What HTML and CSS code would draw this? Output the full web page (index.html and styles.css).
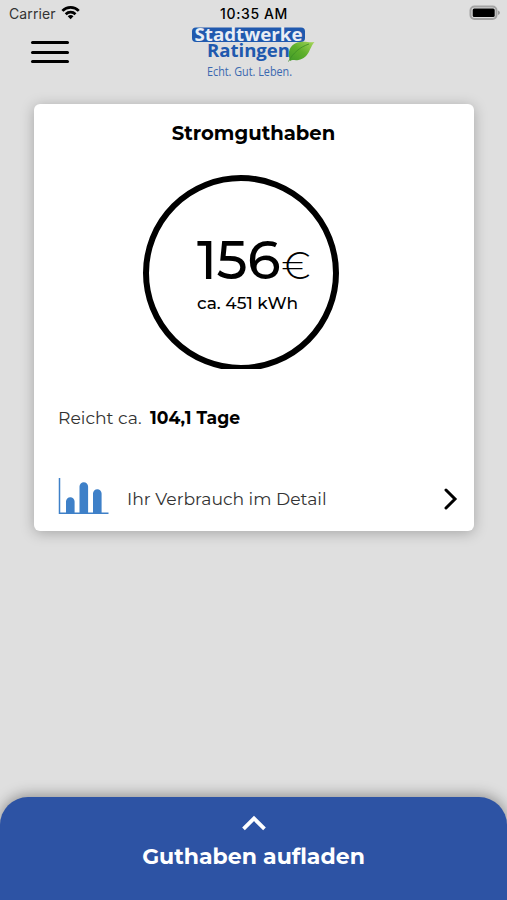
FILE: index.html
```html
<!DOCTYPE html>
<html lang="de">
<head>
<meta charset="utf-8">
<title>Stromguthaben</title>
<link rel="stylesheet" href="styles.css">
</head>
<body>
<div class="status">
  <div class="carrier"><span>Carrier</span>
    <svg width="20" height="16" viewBox="0 0 20 16"><g fill="none" stroke="#000" stroke-width="2.7"><path d="M1.400 5.900a11.500 11.500 0 0 1 16.400 0"/><path d="M4.700 9.200a7 7 0 0 1 9.800 0"/></g><path d="M6.700 11.300a4.400 4.400 0 0 1 5.800 0L9.600 14.200z"/></svg>
  </div>
  <time class="clock">10:35 AM</time>
  <svg class="battery" width="32" height="16" viewBox="0 0 32 16"><rect x="2.500" y="1.500" width="26" height="12.500" rx="4" fill="#ddd" stroke="#a3a3a3" stroke-width="2"/><rect x="4.700" y="3.500" width="22" height="8.600" rx="1.500"/><path d="M30 5.500q2 1 2 2.300t-2 2.300z" fill="#999"/></svg>
</div>
<header class="topbar">
  <button class="menu" aria-label="Menü"><i></i><i></i><i></i></button>
  <svg class="logo" width="126" height="56" viewBox="0 0 126 56">
    <defs><linearGradient id="leaf" x1="0" y1="1" x2="1" y2="0"><stop offset="0" stop-color="#419a27"/><stop offset=".5" stop-color="#5fb02c"/><stop offset="1" stop-color="#a8d65b"/></linearGradient></defs>
    <rect x="1" y="1.500" width="113" height="14.500" rx="4" fill="#2059ae"/>
    <text x="3.500" y="15" textLength="108" lengthAdjust="spacingAndGlyphs" class="logo-top">Stadtwerke</text>
    <text x="16" y="30.500" textLength="83" lengthAdjust="spacingAndGlyphs" class="logo-name">Ratingen</text>
    <path d="M98.500 33C96 23 101 17 109 16c6-1 9 1 14.500 0-5 5-5 16-16 18-4 1-6-1-8.500 1z" fill="url(#leaf)"/>
    <path d="M97.500 35.500C102 27 109 21 118 18" fill="none" stroke="#3c8d25" stroke-width=".8"/>
    <text x="16" y="50.300" textLength="85" lengthAdjust="spacingAndGlyphs" class="logo-tag">Echt. Gut. Leben.</text>
  </svg>
</header>
<main class="card">
  <h1>Stromguthaben</h1>
  <div class="ring"><div class="reading">
    <div class="amount"><span class="value">156</span><span class="euro">€</span></div>
    <div class="kwh">ca. 451 kWh</div>
  </div></div>
  <p class="range"><span class="range-label">Reicht ca.</span><strong>104,1 Tage</strong></p>
  <a class="detail">
    <svg width="50" height="38" viewBox="0 0 50 38"><path d="M1.500 0v35.300h49" fill="none" stroke="#3e80c8" stroke-width="1.500"/><path d="M8 35V23.500a4.300 4.300 0 0 1 8.600 0V35zM21.500 35V8.500a4.300 4.300 0 0 1 8.600 0V35zM35 35V15.500a4.300 4.300 0 0 1 8.600 0V35z" fill="#3e80c8"/></svg>
    <span class="detail-label">Ihr Verbrauch im Detail</span>
    <svg class="next" width="14" height="22" viewBox="0 0 14 22"><path d="M2 2l9 9-9 9" fill="none" stroke="#000" stroke-width="3" stroke-linecap="round"/></svg>
  </a>
</main>
<footer class="topup">
  <svg width="26" height="16" viewBox="0 0 26 16"><path d="M2.500 13.800L13 3.500l10.500 10.300" fill="none" stroke="#fff" stroke-width="3.800"/></svg>
  <span class="topup-label">Guthaben aufladen</span>
</footer>
</body>
</html>
```
FILE: styles.css
```css
* { box-sizing: border-box; }
body { margin: 0; height: 900px; display: flex; flex-direction: column; overflow: hidden; background: #dfdfdf; color: #000; font-family: Montserrat, Inter, sans-serif; }
svg { display: block; flex: none; overflow: visible; }
.status { height: 24px; padding: 5px 7px 0 9px; display: grid; grid-template-columns: 1fr auto 1fr; font: 14px/18px Inter, sans-serif; }
.carrier { display: flex; gap: 5px; color: #333; letter-spacing: .1px; }
.clock { font-weight: 500; letter-spacing: .6px; margin-right: 1px; }
.battery { justify-self: end; }
.topbar { height: 79.500px; display: flex; align-items: flex-start; padding-left: 31px; }
.menu { width: 38px; margin: 17px 0 0; padding: 0; border: 0; background: none; display: flex; flex-direction: column; gap: 6.500px; }
.menu i { height: 3px; border-radius: 2px; background: #000; }
.logo { margin: 2px 0 0 122px; }
.logo text { font-family: "Open Sans", sans-serif; }
.logo .logo-top { font-size: 17.500px; font-weight: 700; fill: #e8edf4; }
.logo .logo-name { font-size: 18.500px; font-weight: 700; fill: #2059ae; }
.logo .logo-tag { font-size: 13px; fill: #3a68b0; }
.card { width: 440px; height: 427.500px; margin-left: 34px; padding: 17px 16px 0 24px; border-radius: 6px; background: #fff; box-shadow: 0 2px 14px rgba(0,0,0,.26); }
h1 { margin: 0; text-align: center; padding-right: 9px; font-size: 19.600px; line-height: 24px; font-weight: 700; white-space: nowrap; }
.ring { width: 196px; height: 196px; margin: 30px 0 0 85px; padding: 52px 0 0 48px; border: 6px solid #000; border-radius: 50%; clip-path: inset(0 0 1.500px); }
.amount { display: flex; align-items: baseline; height: 54px; line-height: 54px; white-space: nowrap; }
.value { width: 84.500px; font-size: 54px; font-weight: 500; letter-spacing: -.4px; }
.euro { font-size: 37px; font-weight: 300; }
.kwh { margin-top: 5px; font-size: 17px; line-height: 22px; font-weight: 500; white-space: nowrap; }
.range { margin: 35px 0 0; display: flex; font-size: 17.200px; line-height: 24px; white-space: nowrap; }
.range-label { width: 92px; color: #333; }
.detail { margin-top: 48px; height: 38px; display: flex; align-items: flex-start; }
.detail-label { margin: 9px 0 0 19px; font-size: 17.200px; line-height: 24px; color: #333; white-space: nowrap; }
.next { margin: 10px 0 0 auto; }
.topup { height: 103px; margin-top: auto; padding-top: 18px; display: flex; flex-direction: column; align-items: center; border-radius: 28px 28px 0 0; background: #2d53a4; color: #fff; box-shadow: 0 -2px 14px rgba(0,0,0,.36); }
.topup-label { margin-top: 13px; font-size: 22px; line-height: 26px; font-weight: 700; white-space: nowrap; }
```
